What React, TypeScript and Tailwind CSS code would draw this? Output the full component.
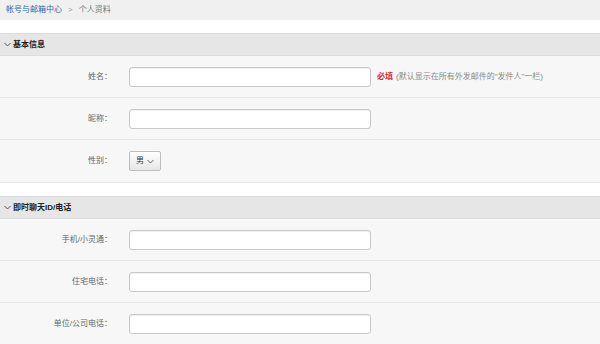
const FONT = "font-['Liberation_Sans','Noto_Sans_CJK_SC',sans-serif]";

function Chevron({ className = "" }: { className?: string }) {
  return (
    <svg width="7" height="5" viewBox="0 0 7 5" className={className} fill="none" stroke="currentColor" strokeWidth="1">
      <polyline points="0.5 1 3.5 4 6.5 1" />
    </svg>
  );
}

function SectionHeader({ title }: { title: string }) {
  return (
    <div className="flex h-[23px] items-center gap-[2px] border-y border-[#dcdcdc] bg-[#e6e6e6] pl-[4px]">
      <Chevron className="text-[#555]" />
      <span className="text-[8px] font-bold text-[#222]">{title}</span>
    </div>
  );
}

function Row({ label, children, last }: { label: string; children: React.ReactNode; last?: boolean }) {
  return (
    <div
      className={`flex h-[42px] items-center bg-[#f7f7f7] ${
        last ? "" : "border-b border-[#e6e6e6] shadow-[0_1px_0_#ffffff]"
      }`}
    >
      <div className="w-[113px] pr-[1px] text-right text-[8px] text-[#666]">{label}：</div>
      <div className="ml-[16px] flex items-center">{children}</div>
    </div>
  );
}

function TextInput() {
  return (
    <input
      type="text"
      className="h-[20px] w-[242px] rounded-[3px] border border-[#c8c8c8] bg-white px-1 text-[8px] shadow-[inset_0_1px_1px_rgba(0,0,0,0.06)] outline-none"
    />
  );
}

export default function App() {
  return (
    <div className={`h-[344px] w-[600px] overflow-hidden bg-white ${FONT}`}>
      {/* Breadcrumb */}
      <div className="flex h-[20px] items-center gap-[6px] bg-[#f0f0f0] pl-[6px] text-[8px]">
        <span className="text-[#2f6aa8]">帐号与邮箱中心</span>
        <span className="text-[#999]">&gt;</span>
        <span className="text-[#777]">个人资料</span>
      </div>

      <div className="h-[13px]" />

      <SectionHeader title="基本信息" />
      <Row label="姓名">
        <TextInput />
        <span className="ml-[6px] text-[8px] font-bold text-[#d0303a]">必填</span>
        <span className="ml-[3px] text-[8px] text-[#888]">(默认显示在所有外发邮件的"发件人"一栏)</span>
      </Row>
      <Row label="昵称">
        <TextInput />
      </Row>
      <Row label="性别" last>
        <div className="flex h-[20px] w-[32px] items-center justify-center gap-[3px] rounded-[2px] border border-[#bdbdbd] bg-gradient-to-b from-white to-[#e6e6e6] text-[8px] text-[#333]">
          <span>男</span>
          <Chevron className="text-[#666]" />
        </div>
      </Row>

      <div className="h-[14px] border-t border-[#e6e6e6]" />

      <SectionHeader title="即时聊天ID/电话" />
      <Row label="手机/小灵通">
        <TextInput />
      </Row>
      <Row label="住宅电话">
        <TextInput />
      </Row>
      <Row label="单位/公司电话">
        <TextInput />
      </Row>
    </div>
  );
}
